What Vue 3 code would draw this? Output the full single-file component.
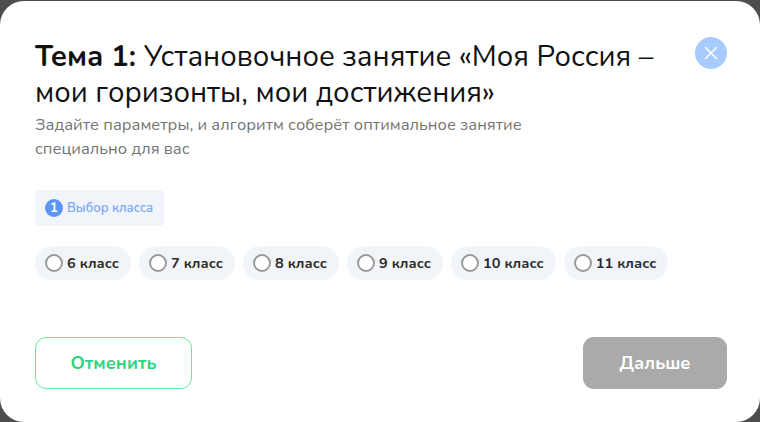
<script setup>
const grades = [6, 7, 8, 9, 10, 11]
</script>

<template>
  <div class="backdrop">
    <div class="modal">
      <header class="head">
        <div class="head-text">
          <h1 class="title"><b>Тема 1:</b> Установочное занятие «Моя Россия –<br>мои горизонты, мои достижения»</h1>
          <p class="sub">Задайте параметры, и алгоритм соберёт оптимальное занятие специально для вас</p>
        </div>
        <button class="close" aria-label="Закрыть">
          <svg width="14" height="14" viewBox="0 0 14 14"><path d="M1.5 1.5l11 11M12.5 1.5l-11 11" stroke="#fff" stroke-width="1.5" stroke-linecap="round" fill="none"/></svg>
        </button>
      </header>
      <div class="step"><span class="num">1</span><span>Выбор класса</span></div>
      <div class="grades">
        <label v-for="g in grades" :key="g" class="grade"><span class="radio"></span>{{ g }} класс</label>
      </div>
      <footer class="foot">
        <button class="btn cancel">Отменить</button>
        <button class="btn next">Дальше</button>
      </footer>
    </div>
  </div>
</template>

<style>
html, body { margin: 0; background: #4d4d4d; }
</style>

<style scoped>
.backdrop { width: 760px; height: 422px; overflow: hidden; font-family: "Nunito", "Noto Sans", "Open Sans", sans-serif; }
.modal { box-sizing: border-box; width: 760px; height: 421px; margin-top: 1px; background: #fff; border-radius: 24px; padding: 37px 33px 33px 35px; display: flex; flex-direction: column; }
.head { display: flex; justify-content: space-between; align-items: flex-start; }
.head-text { width: 640px; }
.title { margin: 0; font-size: 29.2px; line-height: 36px; font-weight: 400; color: #111; white-space: nowrap; }
.title b { font-weight: 700; }
.sub { margin: 3px 0 0; width: 520px; font-size: 16.5px; line-height: 24px; color: #757575; }
.close { margin-top: -1px; width: 32px; height: 32px; border: 0; border-radius: 50%; background: #a8cbff; display: flex; align-items: center; justify-content: center; padding: 0; }
.step { align-self: flex-start; margin-top: 29px; height: 36px; box-sizing: border-box; padding: 0 11px 0 10px; background: #f1f4f9; border-radius: 4px; display: flex; align-items: center; gap: 4px; font-size: 13px; font-weight: 600; color: #7aa8f8; }
.num { width: 18px; height: 18px; border-radius: 50%; background: #5b95f5; color: #fff; display: flex; align-items: center; justify-content: center; font-weight: 700; }
.grades { display: flex; gap: 8px; margin-top: 20px; }
.grade { height: 34px; display: flex; align-items: center; padding: 0 12px 0 10px; gap: 4px; background: #f1f4f9; border-radius: 17px; font-size: 14.5px; letter-spacing: 0.05px; font-weight: 700; color: #2b2b2b; }
.radio { box-sizing: border-box; width: 18px; height: 18px; border: 2px solid #9a9a9a; border-radius: 50%; background: #fff; }
.foot { margin-top: auto; display: flex; justify-content: space-between; }
.btn { box-sizing: border-box; height: 52px; border-radius: 11px; font: inherit; font-size: 18.2px; font-weight: 700; }
.cancel { width: 157px; background: #fff; border: 1px solid #6fe3a8; color: #2dd47f; }
.next { width: 144px; background: #aaa; border: 0; color: #fff; }
</style>
